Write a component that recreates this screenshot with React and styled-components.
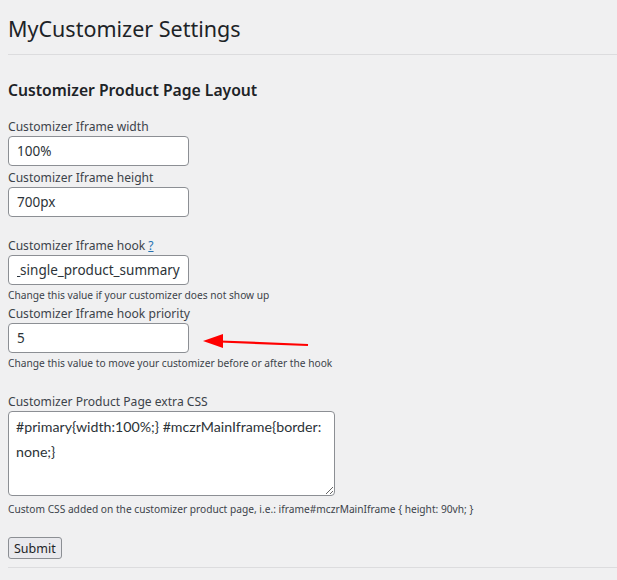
import React, { useEffect, useRef } from 'react'
import styled, { createGlobalStyle } from 'styled-components'

const GlobalStyle = createGlobalStyle`
    html, body {
        margin: 0;
        padding: 0;
        background: #f0f0f1;
    }
    body {
        font-family: "Noto Sans", "Liberation Sans", sans-serif;
        color: #3c434a;
    }
`

const Wrap = styled.div`
    position: relative;
    padding: 14px 0 0 8px;
    width: 609px;
    height: 566px;
    overflow: hidden;
`

const Title = styled.h1`
    margin: 0;
    font-size: 21.5px;
    font-weight: 400;
    line-height: 30px;
    color: #1d2327;
`

const Rule = styled.div`
    height: 1px;
    background: #dcdcde;
    margin-top: ${p => p.$top || 10}px;
`

const Section = styled.h2`
    margin: 24px 0 0;
    font-size: 15.7px;
    font-weight: 600;
    line-height: 22px;
    color: #1d2327;
`

const Field = styled.div`
    display: flex;
    flex-direction: column;
    margin-top: ${p => p.$top || 0}px;
`

const Label = styled.label`
    font-size: 12.1px;
    line-height: 17px;
    color: #3c434a;
    margin-bottom: 1px;
`

const HelpLink = styled.a`
    color: #2271b1;
    text-decoration: underline;
    margin-left: 3px;
`

const Input = styled.input`
    box-sizing: border-box;
    width: 181px;
    height: 30px;
    padding: 0 8px;
    border: 1px solid #8c8f94;
    border-radius: 4px;
    background: #fff;
    font-family: "Noto Sans", "Liberation Sans", sans-serif;
    font-size: 13.5px;
    color: #2c3338;
    outline: none;
`

const Description = styled.p`
    margin: ${p => p.$top || 2}px 0 0;
    font-size: 10.2px;
    line-height: 16px;
    color: #3c434a;
`

const TextArea = styled.textarea`
    box-sizing: border-box;
    width: 327px;
    height: 85px;
    padding: 2px 6px 4px 7px;
    border: 1px solid #8c8f94;
    border-radius: 4px;
    background: #fff;
    font-family: Lato, "Noto Sans", sans-serif;
    font-size: 14.2px;
    line-height: 25px;
    color: #2c3338;
    resize: both;
    outline: none;
`

const SubmitButton = styled.button`
    margin-top: 20px;
    align-self: flex-start;
    height: 22px;
    padding: 0 5px;
    border: 1px solid #8c8f94;
    border-radius: 3px;
    background: #e9e9ed;
    font-family: "Noto Sans", "Liberation Sans", sans-serif;
    font-size: 12.5px;
    color: #1d2327;
`

const Form = styled.form`
    display: flex;
    flex-direction: column;
    margin-top: 17px;
`

const Arrow = styled.svg`
    position: absolute;
    left: 200px;
    top: 332px;
`

function App() {
    const hookRef = useRef(null)

    useEffect(() => {
        if (hookRef.current) {
            hookRef.current.scrollLeft = hookRef.current.scrollWidth
        }
    }, [])

    return (
        <Wrap>
            <GlobalStyle />
            <Title>MyCustomizer Settings</Title>
            <Rule />
            <Section>Customizer Product Page Layout</Section>
            <Form onSubmit={e => e.preventDefault()}>
                <Field>
                    <Label>Customizer Iframe width</Label>
                    <Input defaultValue="100%" />
                </Field>
                <Field $top={3}>
                    <Label>Customizer Iframe height</Label>
                    <Input defaultValue="700px" />
                </Field>
                <Field $top={20}>
                    <Label>Customizer Iframe hook<HelpLink href="#">?</HelpLink></Label>
                    <Input ref={hookRef} defaultValue="woocommerce_after_single_product_summary" />
                    <Description>Change this value if your customizer does not show up</Description>
                </Field>
                <Field $top={2}>
                    <Label>Customizer Iframe hook priority</Label>
                    <Input defaultValue="5" />
                    <Description>Change this value to move your customizer before or after the hook</Description>
                </Field>
                <Field $top={22}>
                    <Label>Customizer Product Page extra CSS</Label>
                    <TextArea defaultValue={'#primary{width:100%;} #mczrMainIframe{border:\u200Bnone;}'} />
                    <Description $top={5}>Custom CSS added on the customizer product page, i.e.: iframe#mczrMainIframe {'{'} height: 90vh; {'}'}</Description>
                </Field>
                <SubmitButton type="submit">Submit</SubmitButton>
            </Form>
            <Rule $top={8} />
            <Arrow width="112" height="20" viewBox="0 0 112 20">
                <line x1="20" y1="9.5" x2="108" y2="13" stroke="#f00" strokeWidth="2.2" />
                <polygon points="3,9 23,2 23,16" fill="#f00" />
            </Arrow>
        </Wrap>
    )
}

export default App
